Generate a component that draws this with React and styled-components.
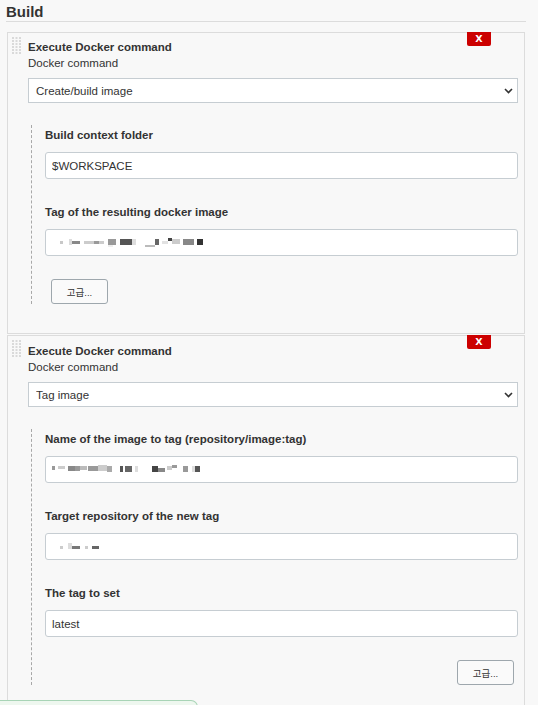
import React from "react";
import styled, { createGlobalStyle } from "styled-components";

const GlobalStyle = createGlobalStyle`
  body {
    margin: 0;
    background: #f8f8f8;
    font-family: "Liberation Sans", Arial, "Noto Sans CJK KR", sans-serif;
    color: #333;
  }
`;

const Page = styled.div`
  width: 538px;
  min-height: 705px;
  overflow: hidden;
`;

const Heading = styled.h2`
  margin: 0 12px 0 6px;
  padding-top: 2px;
  font-size: 15px;
  line-height: 19px;
  font-weight: bold;
  color: #333;
  border-bottom: 1px solid #dcdcdc;
`;

const Steps = styled.div`
  margin: 10px 0 0 7px;
  width: 518px;
`;

const StepPanel = styled.div`
  position: relative;
  box-sizing: border-box;
  width: 518px;
  margin-top: ${(p) => p.$gap || 0}px;
  padding: ${(p) => p.$top}px 6px ${(p) => p.$bottom}px 20px;
  border: 1px solid #dcdcdc;
  background: #f8f8f8;
`;

const Grip = styled.svg`
  position: absolute;
  left: 4px;
  top: 4px;
`;

const DeleteButton = styled.button`
  position: absolute;
  top: -1px;
  right: 33px;
  width: 24px;
  height: 14px;
  padding: 0;
  border: none;
  border-radius: 0 0 2px 2px;
  background: #cc0000;
  color: #fff;
  font-family: "DejaVu Sans", sans-serif;
  font-size: 9.5px;
  font-weight: bold;
  line-height: 14px;
  cursor: pointer;
`;

const StepTitle = styled.div`
  font-size: 11.5px;
  line-height: 16px;
  font-weight: bold;
  padding-top: 1px;
`;

const Caption = styled.div`
  font-size: 11.5px;
  line-height: 16px;
`;

const SelectWrap = styled.div`
  position: relative;
  margin-top: 7px;
`;

const Select = styled.select`
  display: block;
  box-sizing: border-box;
  width: 100%;
  height: 25px;
  margin: 0;
  padding: 0 20px 0 7px;
  appearance: none;
  border: 1px solid #c6cdd2;
  border-radius: 0;
  background: #fff;
  color: #333;
  font-family: inherit;
  font-size: 11.5px;
`;

const Chevron = styled.svg`
  position: absolute;
  right: 5px;
  top: 10px;
  pointer-events: none;
`;

const Nested = styled.div`
  margin: 22px 0 0 3px;
  padding: 2px 0 0 13px;
  border-left: 1px dashed #a8a8a8;
`;

const Field = styled.div`
  & + & {
    margin-top: 25px;
  }
`;

const Label = styled.div`
  font-size: 11.5px;
  line-height: 16px;
  font-weight: bold;
  margin-bottom: 9px;
`;

const InputWrap = styled.div`
  position: relative;
`;

const TextInput = styled.input`
  display: block;
  box-sizing: border-box;
  width: 100%;
  height: 27px;
  margin: 0;
  padding: 0 6px;
  border: 1px solid #c6cdd2;
  border-radius: 3px;
  background: #fff;
  color: #333;
  font-family: inherit;
  font-size: 11.5px;
  outline: none;
`;

const Blur = styled.svg`
  position: absolute;
  left: 0;
  top: 0;
  pointer-events: none;
`;

const ButtonRow = styled.div`
  display: flex;
  justify-content: ${(p) => (p.$end ? "flex-end" : "flex-start")};
  margin-top: 23px;
  padding: ${(p) => (p.$end ? "0 4px 0 0" : "0 0 0 6px")};
`;

const AdvancedButton = styled.button`
  box-sizing: border-box;
  width: 57px;
  height: 25px;
  padding: 0;
  border: 1px solid #9ea7ad;
  border-radius: 3px;
  background: #fafafa;
  color: #333;
  font-family: "Liberation Sans", "Noto Sans CJK KR", sans-serif;
  font-size: 9.5px;
  cursor: pointer;
`;

const Toast = styled.div`
  position: fixed;
  left: 0;
  top: 700px;
  width: 198px;
  height: 30px;
  box-sizing: border-box;
  border: 1px solid #a8d4b6;
  border-left: none;
  border-top-right-radius: 7px;
  background: #eef7ef;
`;

const masks = {
  tag: [
    [15, 12, 3, 3, "#c8c8c8"],
    [24, 10, 3, 6, "#dcdcdc"],
    [27, 12, 8, 3, "#888"],
    [39, 12, 10, 3, "#ccc"],
    [49, 12, 5, 3, "#999"],
    [54, 12, 5, 3, "#ccc"],
    [63, 10, 8, 6, "#999"],
    [63, 16, 5, 2, "#eee"],
    [75, 10, 12, 6, "#555"],
    [87, 10, 4, 6, "#ddd"],
    [100, 16, 10, 2, "#bbb"],
    [110, 10, 4, 6, "#666"],
    [117, 12, 6, 3, "#e2e2e2"],
    [123, 9, 4, 3, "#444"],
    [127, 10, 8, 5, "#ccc"],
    [138, 10, 11, 6, "#888"],
    [152, 10, 6, 6, "#333"],
  ],
  source: [
    [7, 10, 3, 4, "#999"],
    [13, 10, 7, 3, "#ccc"],
    [23, 10, 7, 5, "#888"],
    [30, 10, 5, 5, "#999"],
    [35, 10, 7, 4, "#bbb"],
    [43, 10, 10, 5, "#999"],
    [53, 9, 9, 6, "#ccc"],
    [62, 10, 5, 6, "#aaa"],
    [75, 10, 3, 6, "#555"],
    [80, 10, 7, 6, "#666"],
    [90, 10, 3, 6, "#ddd"],
    [107, 10, 6, 6, "#444"],
    [113, 12, 7, 4, "#888"],
    [122, 10, 5, 4, "#ccc"],
    [127, 9, 5, 3, "#999"],
    [138, 10, 5, 6, "#999"],
    [147, 10, 3, 6, "#ddd"],
    [150, 10, 5, 6, "#555"],
  ],
  repo: [
    [15, 13, 3, 3, "#ccc"],
    [23, 10, 4, 6, "#ddd"],
    [27, 13, 8, 3, "#777"],
    [40, 13, 3, 3, "#ccc"],
    [47, 13, 7, 3, "#666"],
  ],
};

const GripIcon = () => (
  <Grip width="10" height="18" viewBox="0 0 10 18">
    {[0, 1, 2, 3, 4, 5].map((r) =>
      [0, 1, 2].map((c) => (
        <rect key={`${r}-${c}`} x={c * 3.5} y={r * 3} width="2" height="2" fill="#d9d9d9" />
      ))
    )}
  </Grip>
);

const ChevronIcon = () => (
  <Chevron width="9" height="6" viewBox="0 0 9 6">
    <path d="M1 1 L4.5 4.5 L8 1" fill="none" stroke="#333" strokeWidth="1.6" />
  </Chevron>
);

const MaskedInput = ({ blocks }) => (
  <InputWrap>
    <TextInput defaultValue="" aria-label="masked" />
    <Blur width="200" height="27">
      {blocks.map(([x, y, w, h, fill], i) => (
        <rect key={i} x={x} y={y} width={w} height={h} fill={fill} />
      ))}
    </Blur>
  </InputWrap>
);

const StepHeader = ({ value, options }) => (
  <>
    <GripIcon />
    <DeleteButton>X</DeleteButton>
    <StepTitle>Execute Docker command</StepTitle>
    <Caption>Docker command</Caption>
    <SelectWrap>
      <Select defaultValue={value}>
        {options.map((o) => (
          <option key={o}>{o}</option>
        ))}
      </Select>
      <ChevronIcon />
    </SelectWrap>
  </>
);

const commands = ["Create/build image", "Tag image", "Push image", "Remove image"];

const App = () => (
  <Page>
    <GlobalStyle />
    <Heading>Build</Heading>
    <Steps>
      <StepPanel $top={5} $bottom={29}>
        <StepHeader value="Create/build image" options={commands} />
        <Nested>
          <Field>
            <Label>Build context folder</Label>
            <TextInput defaultValue="$WORKSPACE" />
          </Field>
          <Field>
            <Label>Tag of the resulting docker image</Label>
            <MaskedInput blocks={masks.tag} />
          </Field>
          <ButtonRow>
            <AdvancedButton>고급...</AdvancedButton>
          </ButtonRow>
        </Nested>
      </StepPanel>
      <StepPanel $gap={1} $top={6} $bottom={29}>
        <StepHeader value="Tag image" options={commands} />
        <Nested>
          <Field>
            <Label>Name of the image to tag (repository/image:tag)</Label>
            <MaskedInput blocks={masks.source} />
          </Field>
          <Field>
            <Label>Target repository of the new tag</Label>
            <MaskedInput blocks={masks.repo} />
          </Field>
          <Field>
            <Label>The tag to set</Label>
            <TextInput defaultValue="latest" />
          </Field>
          <ButtonRow $end>
            <AdvancedButton>고급...</AdvancedButton>
          </ButtonRow>
        </Nested>
      </StepPanel>
    </Steps>
    <Toast />
  </Page>
);

export default App;
